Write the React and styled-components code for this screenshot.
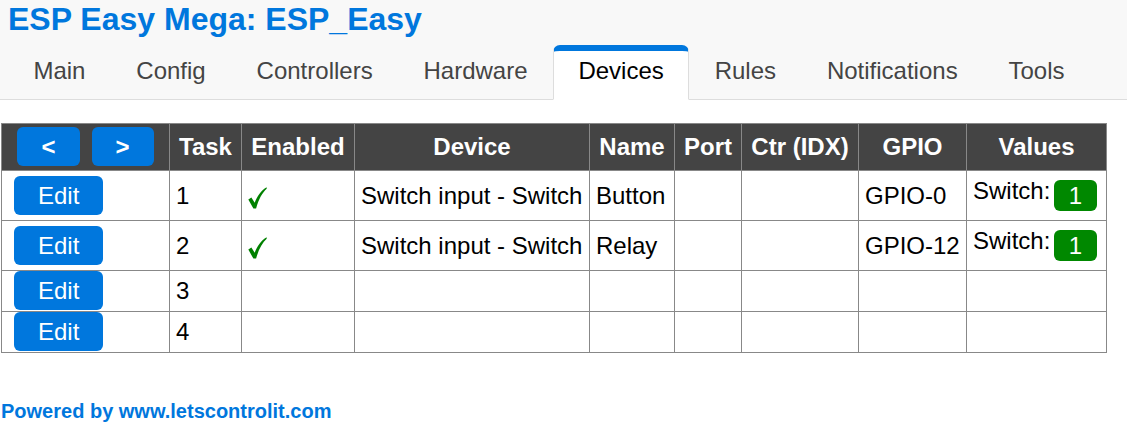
import React from "react";
import styled, { createGlobalStyle } from "styled-components";

const Global = createGlobalStyle`
  html, body { margin: 0; padding: 0; background: #fff; }
  body { font-family: "Liberation Sans", Arial, sans-serif; font-size: 24px; color: #000; }
  * { box-sizing: border-box; }
`;

const Header = styled.header`
  height: 100px;
  background: #f8f8f8;
  border-bottom: 1px solid #ddd;
  padding: 0 8px;
  display: flex;
  flex-direction: column;
`;

const Title = styled.h1`
  margin: 1px 0 0;
  font-size: 32px;
  font-weight: bold;
  color: #07d;
  line-height: normal;
`;

const MenuBar = styled.nav`
  margin-top: auto;
  margin-bottom: -1px;
  display: flex;
`;

const Tab = styled.a`
  display: block;
  height: 55px;
  padding: 6px 24.45px 15px;
  line-height: 27px;
  font-size: 24px;
  white-space: nowrap;
  text-decoration: none;
  border-style: solid;
  border-width: 6px 1px 1px;
  border-radius: 7px 7px 0 0;
  border-color: ${(p) => (p.$active ? "#07d #ddd #fff" : "transparent")};
  background: ${(p) => (p.$active ? "#fff" : "transparent")};
  color: ${(p) => (p.$active ? "#000" : "#444")};
`;

const Content = styled.main`
  padding: 23px 0 0 1px;
`;

const Table = styled.table`
  border-collapse: collapse;
  table-layout: fixed;
  width: 1106px;
`;

const Th = styled.th`
  width: ${(p) => p.$w}px;
  padding: 9px;
  background: #444;
  color: #fff;
  font-weight: bold;
  border: 1px solid #888;
  text-align: center;
  vertical-align: middle;
  white-space: nowrap;
`;

const Td = styled.td`
  padding: 6px;
  border: 1px solid #888;
  vertical-align: middle;
  white-space: nowrap;
`;

const Button = styled.a`
  display: inline;
  margin: 6px;
  padding: 6px 24px;
  background: #07d;
  color: #fff;
  text-decoration: none;
  border-radius: 6px;
  font-weight: ${(p) => (p.$bold ? "bold" : "normal")};
`;

const Values = styled.div`
  display: flex;
  justify-content: space-between;
  align-items: flex-start;
`;

const Badge = styled.span`
  margin: 3px;
  padding: 1.5px 15px;
  line-height: normal;
  background: #080;
  color: #fff;
  border-radius: 6px;
`;

const Check = styled.svg`
  display: inline-block;
  vertical-align: middle;
  margin-top: 2px;
`;

const Footer = styled.footer`
  margin-top: 47px;
  padding-left: 0;
  font-size: 20px;
  font-weight: bold;
  color: #07d;
`;

const CheckMark = () => (
  <Check width="19" height="22" viewBox="0 0 19 22">
    <path
      d="M0.3 12.6 L3.4 10.4 L6.7 15.8 C9.2 9.4 13.2 3.4 18.6 0.3 L18.7 1.8 C14.4 5.6 10.6 12.2 8.1 21.6 L5.4 21.6 Z"
      fill="#008000"
    />
  </Check>
);

const tabs = ["Main", "Config", "Controllers", "Hardware", "Devices", "Rules", "Notifications", "Tools"];

const cols = [
  { label: null, w: 168 },
  { label: "Task", w: 72 },
  { label: "Enabled", w: 113 },
  { label: "Device", w: 235 },
  { label: "Name", w: 85 },
  { label: "Port", w: 67 },
  { label: "Ctr (IDX)", w: 117 },
  { label: "GPIO", w: 108 },
  { label: "Values", w: 140 },
];

const rows = [
  { task: 1, enabled: true, device: "Switch input - Switch", name: "Button", gpio: "GPIO-0", value: "1" },
  { task: 2, enabled: true, device: "Switch input - Switch", name: "Relay", gpio: "GPIO-12", value: "1" },
  { task: 3 },
  { task: 4 },
];

export default function App() {
  return (
    <>
      <Global />
      <Header>
        <Title>ESP Easy Mega: ESP_Easy</Title>
        <MenuBar>
          {tabs.map((t) => (
            <Tab key={t} $active={t === "Devices"}>
              {t}
            </Tab>
          ))}
        </MenuBar>
      </Header>
      <Content>
        <Table>
          <thead>
            <tr>
              {cols.map((c, i) => (
                <Th key={i} $w={c.w}>
                  {c.label === null ? (
                    <>
                      <Button $bold>&lt;</Button>
                      <Button $bold>&gt;</Button>
                    </>
                  ) : (
                    c.label
                  )}
                </Th>
              ))}
            </tr>
          </thead>
          <tbody>
            {rows.map((r) => (
              <tr key={r.task}>
                <Td>
                  <Button>Edit</Button>
                </Td>
                <Td>{r.task}</Td>
                <Td>{r.enabled ? <CheckMark /> : null}</Td>
                <Td>{r.device}</Td>
                <Td>{r.name}</Td>
                <Td></Td>
                <Td></Td>
                <Td>{r.gpio}</Td>
                <Td>
                  {r.value ? (
                    <Values>
                      <span>Switch:</span>
                      <Badge>{r.value}</Badge>
                    </Values>
                  ) : null}
                </Td>
              </tr>
            ))}
          </tbody>
        </Table>
        <Footer>Powered by www.letscontrolit.com</Footer>
      </Content>
    </>
  );
}
